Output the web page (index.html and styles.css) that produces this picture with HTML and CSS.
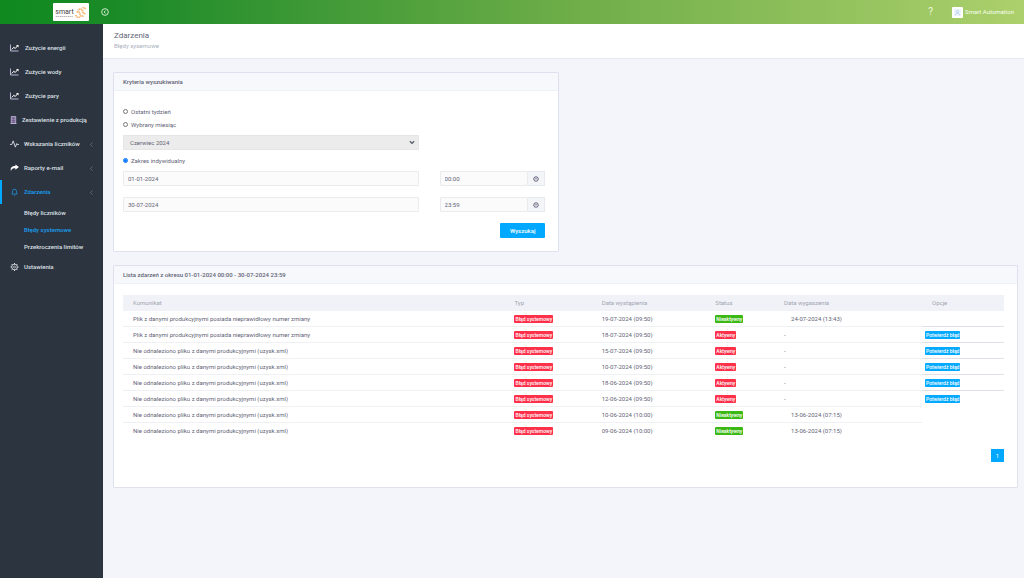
FILE: index.html
```html
<!DOCTYPE html>
<html lang="pl">
<head>
<meta charset="utf-8">
<title>Zdarzenia</title>
<link rel="stylesheet" href="styles.css">
</head>
<body>
<svg class="defs" aria-hidden="true">
  <symbol id="chart" viewBox="0 0 18 16"><path d="M1 1v13h16" fill="none" stroke="#c9c5e6" stroke-width="1.800"/><path d="M3.500 11l4-4.500 3 2.500 5-6" fill="none" stroke="#fff" stroke-width="2"/><path d="M12 2h5v5z" fill="#fff"/></symbol>
  <symbol id="gear" viewBox="0 0 24 24"><circle cx="12" cy="12" r="8.500" fill="none" stroke="currentColor" stroke-width="2.500"/><circle cx="12" cy="12" r="3" fill="none" stroke="currentColor" stroke-width="2"/><path d="M12 0v4M12 20v4M0 12h4M20 12h4M3.500 3.500L6 6M18 18l2.500 2.500M20.500 3.500L18 6M6 18l-2.500 2.500" stroke="currentColor" stroke-width="3"/></symbol>
  <symbol id="clock" viewBox="0 0 24 24"><circle cx="12" cy="12" r="9" fill="none" stroke="currentColor" stroke-width="4"/><path d="M8 11h8" stroke="currentColor" stroke-width="3"/></symbol>
  <symbol id="chev" viewBox="0 0 6 10"><path d="M5 1L1 5l4 4" fill="none" stroke="currentColor" stroke-width="1.300"/></symbol>
</svg>
<header class="topbar">
  <div class="brand">
    <a class="logo" href="#" aria-label="smart">
      <span class="logo-name"><span class="logo-text">smart</span><svg class="logo-line" viewBox="0 0 34 2"><path d="M0 1h34" stroke="#999" stroke-width="1.500" stroke-dasharray="3 1"/></svg></span>
      <svg class="logo-mark" viewBox="0 0 24 24"><g fill="none" stroke="#f7b878" stroke-width="3.500" stroke-dasharray="3 .8"><path d="M21 15a5 5 0 0 1-6-6 5 5 0 0 0-9 0M21 6a5 5 0 0 0-7-2"/><path d="M3 12a5 5 0 0 1 7 4 4 4 0 0 0 7 3M2 18a5 5 0 0 0 8 4"/></g></svg>
    </a>
  </div>
  <button class="collapse" aria-label="Zwiń menu"><svg viewBox="0 0 18 18"><circle cx="9" cy="9" r="7.500" fill="none" stroke="currentColor" stroke-width="2"/><path d="M10.500 5.500L7 9l3.500 3.500" fill="none" stroke="currentColor" stroke-width="2"/></svg></button>
  <div class="user">
    <a class="help" href="#">?</a>
    <a class="account" href="#"><span class="avatar"><svg viewBox="0 0 20 20"><rect width="20" height="20" fill="#eff5fd"/><circle cx="10" cy="7" r="3.500" fill="none" stroke="#a4c6ef" stroke-width="2"/><path d="M4 18c0-8 12-8 12 0" fill="none" stroke="#a4c6ef" stroke-width="2"/></svg></span>Smart Automation</a>
  </div>
</header>
<div class="shell">
  <nav class="sidebar">
    <a href="#" class="item"><svg><use href="#chart"/></svg>Zużycie energii</a>
    <a href="#" class="item"><svg><use href="#chart"/></svg>Zużycie wody</a>
    <a href="#" class="item"><svg><use href="#chart"/></svg>Zużycie pary</a>
    <a href="#" class="item tight"><svg viewBox="0 0 16 18"><path d="M3 1h10v16H3z" fill="#6f5f8c" stroke="#cdbbe0" stroke-width="1.800"/><path d="M6 4v1M10 4v1M6 8v1M10 8v1M6 12v1M10 12v1" stroke="#fff" stroke-width="1.500"/><path d="M1 17h14" stroke="#cdbbe0" stroke-width="1.500"/></svg>Zestawienie z produkcją</a>
    <a href="#" class="item mid"><svg viewBox="0 0 20 18"><path d="M0 10h4l3-8 5 14 3-8 1 2h4" fill="none" stroke="#dfe3ea" stroke-width="2"/></svg>Wskazania liczników<svg class="chev"><use href="#chev"/></svg></a>
    <a href="#" class="item mid"><svg viewBox="0 0 20 18"><path d="M12 1l8 6-8 6V9.500c-6 0-8 1-10 6C0 8 4 4.500 12 4.500z" fill="#fff"/></svg>Raporty e-mail<svg class="chev"><use href="#chev"/></svg></a>
    <a href="#" class="item mid active"><svg viewBox="0 0 20 20"><path d="M3 15c2-2 2-4 2-7a5 5 0 0 1 10 0c0 3 0 5 2 7zM8 17.500c1 1.500 3 1.500 4 0" fill="none" stroke="currentColor" stroke-width="1.800"/></svg>Zdarzenia<svg class="chev"><use href="#chev"/></svg></a>
    <div class="submenu">
      <a href="#">Błędy liczników</a>
      <a href="#" class="current">Błędy systemowe</a>
      <a href="#">Przekroczenia limitów</a>
    </div>
    <a href="#" class="item mid last"><svg><use href="#gear"/></svg>Ustawienia</a>
  </nav>
  <main class="main">
    <div class="page-head">
      <h1>Zdarzenia</h1>
      <p>Błędy sysemowe</p>
    </div>
    <div class="content">
      <section class="panel criteria">
        <h2>Kryteria wyszukiwania</h2>
        <form class="form">
          <label class="radio"><input type="radio" name="range">Ostatni tydzień</label>
          <label class="radio"><input type="radio" name="range">Wybrany miesiąc</label>
          <div class="grid"><div class="month"><select aria-label="Miesiąc" disabled><option>Czerwiec 2024</option></select><svg viewBox="0 0 10 8"><path d="M1.500 2L5 5.500 8.500 2" fill="none" stroke="#555b66" stroke-width="2.200"/></svg></div></div>
          <label class="radio custom"><input type="radio" name="range" checked>Zakres indywidualny</label>
          <div class="grid dates">
            <input class="field" type="text" value="01-01-2024" aria-label="Data od">
            <div class="time"><input class="field" type="text" value="00:00" aria-label="Godzina od"><button type="button" aria-label="Wybierz godzinę od"><svg><use href="#clock"/></svg></button></div>
            <input class="field" type="text" value="30-07-2024" aria-label="Data do">
            <div class="time"><input class="field" type="text" value="23:59" aria-label="Godzina do"><button type="button" aria-label="Wybierz godzinę do"><svg><use href="#clock"/></svg></button></div>
          </div>
          <div class="actions"><button type="button" class="search">Wyszukaj</button></div>
        </form>
      </section>
      <section class="panel events">
        <h2>Lista zdarzeń z okresu 01-01-2024 00:00 - 30-07-2024 23:59</h2>
        <div class="table-wrap">
          <table>
            <colgroup><col class="c-msg"><col class="c-type"><col class="c-date"><col class="c-status"><col class="c-end"><col class="c-opt"></colgroup>
            <thead><tr><th>Komunikat</th><th>Typ</th><th>Data wystąpienia</th><th>Status</th><th>Data wygaszenia</th><th>Opcje</th></tr></thead>
            <tbody>
              <tr><td>Plik z danymi produkcyjnymi posiada nieprawidłowy numer zmiany</td><td><span class="tag red">Błąd systemowy</span></td><td>19-07-2024 (09:50)</td><td><span class="tag green">Nieaktywny</span></td><td class="ended">24-07-2024 (13:43)</td><td class="opt"></td></tr>
              <tr><td>Plik z danymi produkcyjnymi posiada nieprawidłowy numer zmiany</td><td><span class="tag red">Błąd systemowy</span></td><td>18-07-2024 (09:50)</td><td><span class="tag red">Aktywny</span></td><td>-</td><td class="opt"><button class="tag blue">Potwierdź błąd</button></td></tr>
              <tr><td>Nie odnaleziono pliku z danymi produkcyjnymi (uzysk.xml)</td><td><span class="tag red">Błąd systemowy</span></td><td>15-07-2024 (09:50)</td><td><span class="tag red">Aktywny</span></td><td>-</td><td class="opt"><button class="tag blue">Potwierdź błąd</button></td></tr>
              <tr><td>Nie odnaleziono pliku z danymi produkcyjnymi (uzysk.xml)</td><td><span class="tag red">Błąd systemowy</span></td><td>10-07-2024 (09:50)</td><td><span class="tag red">Aktywny</span></td><td>-</td><td class="opt"><button class="tag blue">Potwierdź błąd</button></td></tr>
              <tr><td>Nie odnaleziono pliku z danymi produkcyjnymi (uzysk.xml)</td><td><span class="tag red">Błąd systemowy</span></td><td>18-06-2024 (09:50)</td><td><span class="tag red">Aktywny</span></td><td>-</td><td class="opt"><button class="tag blue">Potwierdź błąd</button></td></tr>
              <tr><td>Nie odnaleziono pliku z danymi produkcyjnymi (uzysk.xml)</td><td><span class="tag red">Błąd systemowy</span></td><td>12-06-2024 (09:50)</td><td><span class="tag red">Aktywny</span></td><td>-</td><td class="opt plain"><button class="tag blue">Potwierdź błąd</button></td></tr>
              <tr><td>Nie odnaleziono pliku z danymi produkcyjnymi (uzysk.xml)</td><td><span class="tag red">Błąd systemowy</span></td><td>10-06-2024 (10:00)</td><td><span class="tag green">Nieaktywny</span></td><td class="ended">13-06-2024 (07:15)</td><td class="opt plain"></td></tr>
              <tr><td>Nie odnaleziono pliku z danymi produkcyjnymi (uzysk.xml)</td><td><span class="tag red">Błąd systemowy</span></td><td>09-06-2024 (10:00)</td><td><span class="tag green">Nieaktywny</span></td><td class="ended">13-06-2024 (07:15)</td><td class="opt plain"></td></tr>
            </tbody>
          </table>
          <div class="pager"><a href="#">1</a></div>
        </div>
      </section>
    </div>
  </main>
</div>
</body>
</html>
```
FILE: styles.css
```css
* { box-sizing: border-box; }
body { margin: 0; min-height: 100vh; display: flex; flex-direction: column; font: 6px/8px Roboto, "Noto Sans", sans-serif; color: #5f6376; background: #f4f5fa; }
a { color: inherit; text-decoration: none; }
button, input, select { font: inherit; color: inherit; margin: 0; }
button { border: 0; padding: 0; cursor: pointer; }
.defs { display: none; }

.topbar { display: flex; align-items: center; height: 24px; color: #fff; background: linear-gradient(90deg, #0f8a1f 0%, #1b8a28 12%, #6dad48 55%, #acd06c 100%); }
.brand { width: 103px; display: flex; padding-left: 53px; }
.logo { display: flex; align-items: center; justify-content: center; gap: 1px; width: 36px; height: 18px; background: #fff; border-radius: 1px; overflow: hidden; }
.logo-name { display: flex; flex-direction: column; align-items: stretch; }
.logo-text { font: 7px/8px "Liberation Sans Narrow", Roboto, sans-serif; color: #444; }
.logo-line { width: 100%; height: 1px; }
.logo-mark { width: 12px; height: 12px; flex: none; }
.collapse { display: flex; width: 8px; height: 8px; background: none; color: #e4f5df; margin-left: -2px; }
.collapse svg { width: 8px; height: 8px; }
.user { margin-left: auto; display: flex; align-items: center; padding-right: 10px; gap: 19px; }
.help { font-size: 10px; line-height: 12px; color: #eef8dd; }
.account { display: flex; align-items: center; gap: 2px; color: #f9fdf0; }
.avatar { display: flex; width: 11px; height: 11px; padding: 2px; background: #fff; border-radius: 1px; }
.avatar svg { width: 100%; height: 100%; }

.shell { flex: 1; display: flex; }
.sidebar { width: 103px; flex: none; background: #2c343f; color: #dce0e7; padding-top: 12px; font-weight: 500; }
.item { display: flex; align-items: center; height: 24px; padding: 0 10px; gap: 6px; }
.item svg { width: 9px; height: 8px; flex: none; }
.item.tight { gap: 4px; padding-left: 9px; }
.item.mid { gap: 5px; }
.item svg.chev { width: 3px; height: 5px; margin-left: auto; color: #798290; }
.active { color: #1a9ff0; border-left: 2px solid #00a8ff; }
.item.active { padding-left: 8px; }
.submenu { display: flex; flex-direction: column; padding-left: 24px; }
.submenu a { height: 17px; line-height: 17px; }
.submenu .current { color: #1a9ff0; }

.main { flex: 1; min-width: 0; }
.page-head { height: 35px; padding: 7px 11px; background: #fff; border-bottom: 1px solid #e6e9f0; }
h1 { margin: 0; font-size: 8px; line-height: 10px; font-weight: 400; }
.page-head p { margin: 1px 0 0; color: #a9b0bd; }
.content { padding: 13px 6px 13px 10px; display: flex; flex-direction: column; gap: 13px; }
.panel { background: #fff; border: 1px solid #dfe2ee; border-radius: 1px; }
.criteria { width: 49.3%; min-height: 180px; }
.events { min-height: 223px; }
.panel h2 { margin: 0; height: 18px; padding: 0 9px; font-size: 6px; line-height: 17px; font-weight: 500; background: #f7f8fb; border-bottom: 1px solid #eef1f6; }
.form { padding: 14px 13px 0 9px; }
.radio { display: flex; align-items: center; height: 13px; gap: 3px; }
.radio input { width: 5px; height: 5px; }
.grid { display: grid; grid-template-columns: 14fr 5fr; column-gap: 21px; }
.month { display: flex; align-items: center; height: 15px; margin-top: 4px; padding: 0 3px 0 6px; border: 1px solid #e6e6e6; background: #ececec; }
.month select { flex: 1; appearance: none; border: 0; padding: 0; background: none; opacity: 1; }
.month svg { width: 6px; height: 5px; }
.custom { margin-top: 4px; }
.dates { row-gap: 11px; margin-top: 4px; }
.field { width: 100%; min-width: 0; height: 15px; border: 1px solid #e9ebef; border-radius: 1px; background: #fbfbfb; padding: 0 4px; }
.time { display: flex; }
.time button { display: flex; align-items: center; justify-content: center; width: 17px; flex: none; border: 1px solid #e6e9ef; border-left: 0; background: #f4f5f9; }
.time svg { width: 6px; height: 6px; }
.actions { display: flex; justify-content: flex-end; margin-top: 11px; }
.search { width: 45px; height: 15px; background: #00a8ff; color: #fff; font-weight: 500; border-radius: 1px; }

.table-wrap { padding: 11px 13px 0 9px; }
table { width: 100%; table-layout: fixed; border-collapse: separate; border-spacing: 0; }
.c-msg { width: 43.3%; } .c-type { width: 9.9%; } .c-date { width: 12.9%; } .c-status { width: 7.8%; } .c-end { width: 16.8%; }
th, td { height: 16px; padding: 0 10px; text-align: left; vertical-align: middle; white-space: nowrap; }
th { background: #f1f2f7; color: #a0a4b1; font-weight: 400; }
td { border-bottom: 1px solid #eff0f3; }
tr:last-child td { border-bottom: 0; }
td.ended { padding-left: 17px; }
td.opt { padding: 0 3px; border-color: #dfe1e6; }
td.plain { border-color: transparent; }
.tag { display: block; width: max-content; height: 8px; padding: 0 1px; border-radius: 1px; color: #fff; font-size: 5px; line-height: 8px; font-weight: 500; }
.red { background: #ff3049; }
.green { background: #3cb815; }
.blue { background: #00a8ff; }
.pager { display: flex; justify-content: flex-end; margin-top: 10px; }
.pager a { width: 13px; height: 13px; line-height: 13px; text-align: center; color: #fff; background: #00a8ff; }
```
